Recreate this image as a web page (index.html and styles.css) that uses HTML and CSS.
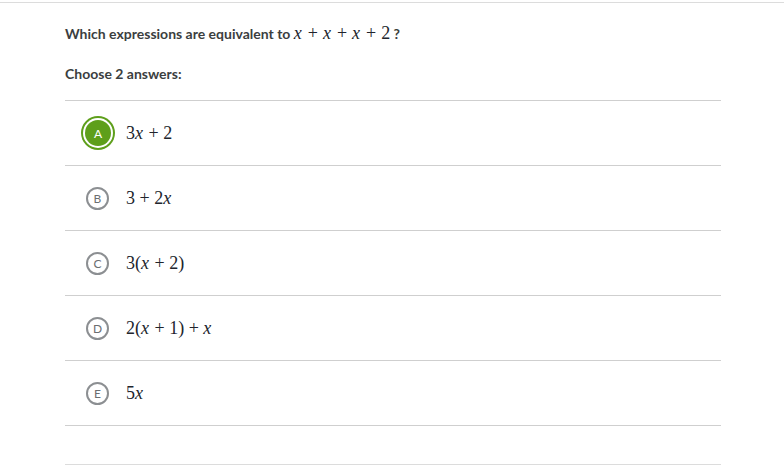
FILE: index.html
```html
<!DOCTYPE html>
<html>
<head>
<meta charset="utf-8">
<link rel="stylesheet" href="styles.css">
</head>
<body>
<div class="topbar"></div>
<main class="content">
  <p class="question">Which expressions are equivalent to <span class="math"><i>x</i><span class="op">+</span><i>x</i><span class="op">+</span><i>x</i><span class="op">+</span>2</span> ?</p>
  <p class="prompt">Choose 2 answers:</p>
  <ul class="choices">
    <li class="choice selected"><span class="badge">A</span><span class="math">3<i>x</i><span class="op">+</span>2</span></li>
    <li class="choice"><span class="badge">B</span><span class="math">3<span class="op">+</span>2<i>x</i></span></li>
    <li class="choice"><span class="badge">C</span><span class="math">3(<i>x</i><span class="op">+</span>2)</span></li>
    <li class="choice"><span class="badge">D</span><span class="math">2(<i>x</i><span class="op">+</span>1)<span class="op">+</span><i>x</i></span></li>
    <li class="choice"><span class="badge">E</span><span class="math">5<i>x</i></span></li>
  </ul>
  <div class="spacer"></div>
</main>
</body>
</html>
```
FILE: styles.css
```css
html, body {
  margin: 0;
  padding: 0;
  background: #fff;
}
body {
  font-family: Lato, "Liberation Sans", sans-serif;
  color: #3b3e40;
}
.topbar {
  height: 2px;
  border-bottom: 1px solid #dcdcdc;
}
.content {
  width: 656px;
  margin-left: 65px;
}
.question {
  margin: 21px 0 0;
  font-size: 14px;
  font-weight: 700;
  line-height: 20px;
  height: 20px;
}
.prompt {
  margin: 20px 0 0;
  font-size: 14px;
  font-weight: 700;
  line-height: 20px;
}
.math {
  font-family: "Liberation Serif", "DejaVu Serif", serif;
  font-weight: 400;
  font-size: 18px;
  color: #21242c;
}
.math i {
  font-style: italic;
  padding-right: 1px;
}
.question .math {
  font-size: 18px;
  line-height: 1;
}
.question .op {
  padding: 0 5px;
}
.op {
  padding: 0 4.5px;
}
.choices {
  list-style: none;
  margin: 16px 0 0;
  padding: 0;
  border-top: 1px solid #cfcfcf;
}
.choice {
  height: 64px;
  border-bottom: 1px solid #cfcfcf;
  display: flex;
  align-items: center;
  gap: 16px;
  padding-left: 21px;
}
.badge {
  box-sizing: border-box;
  width: 23px;
  height: 23px;
  border: 2px solid #8c8f92;
  border-radius: 50%;
  display: flex;
  align-items: center;
  justify-content: center;
  font-family: Lato, "Liberation Sans", sans-serif;
  font-size: 12px;
  font-weight: 400;
  color: #6b6e70;
  margin-left: 0;
  margin-right: 1px;
}
.selected .badge {
  width: 26px;
  height: 26px;
  margin-left: -1px;
  margin-right: -1px;
  border: none;
  background: #5e9f1b;
  color: #fff;
  font-size: 12px;
  box-shadow: 0 0 0 2px #fff, 0 0 0 4px #5e9f1b;
}
.spacer {
  height: 38px;
  border-bottom: 1px solid #dcdcdc;
}
```
